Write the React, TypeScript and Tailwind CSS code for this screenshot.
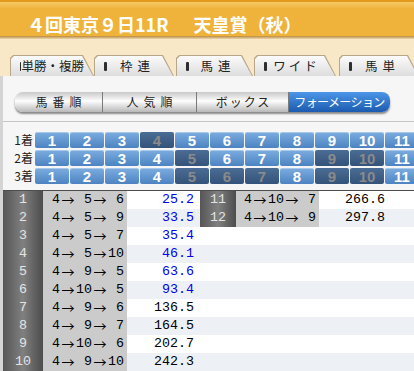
const tabs = [
  { label: "単勝・複勝", cls: "ml-[10px] w-[84px]", text: "tracking-[0px]" },
  { label: "枠 連", cls: "w-[80px]", text: "tracking-[1px]" },
  { label: "馬 連", cls: "ml-[2px] w-[77px]", text: "tracking-[1px]" },
  { label: "ワイド", cls: "ml-[1px] w-[82px]", text: "tracking-[3px]" },
  { label: "馬 単", cls: "ml-[3px] w-[80px]", text: "tracking-[1px]" },
];

const segments = [
  { label: "馬番順", cls: "w-[88px] rounded-l-[8px] tracking-[5px] pl-[5px]" },
  { label: "人気順", cls: "w-[94px] tracking-[5px] pl-[5px]" },
  { label: "ボックス", cls: "w-[92px] tracking-[2px] pl-[2px]" },
];

// disabled numbers per row
const disabled = [[4], [5, 9, 10], [5, 6, 7, 9, 10]];

const leftRows = [
  { n: 1, b: "5", c: "6", odds: "25.2", blue: true },
  { n: 2, b: "5", c: "9", odds: "33.5", blue: true },
  { n: 3, b: "5", c: "7", odds: "35.4", blue: true },
  { n: 4, b: "5", c: "10", odds: "46.1", blue: true },
  { n: 5, b: "9", c: "5", odds: "63.6", blue: true },
  { n: 6, b: "10", c: "5", odds: "93.4", blue: true },
  { n: 7, b: "9", c: "6", odds: "136.5", blue: false },
  { n: 8, b: "9", c: "7", odds: "164.5", blue: false },
  { n: 9, b: "10", c: "6", odds: "202.7", blue: false },
  { n: 10, b: "9", c: "10", odds: "242.3", blue: false },
];

const rightRows = [
  { n: 11, b: "10", c: "7", odds: "266.6" },
  { n: 12, b: "10", c: "9", odds: "297.8" },
];

const Arrow = () => (
  <span className="inline-block w-[16px] text-center font-['Noto_Sans_CJK_JP',sans-serif] text-[13px]">→</span>
);

const Combo = ({ b, c }: { b: string; c: string }) => (
  <span className="inline-flex items-center">
    <span className="inline-block w-[8px] text-right">4</span>
    <Arrow />
    <span className="inline-block w-[16px] text-right">{b}</span>
    <Arrow />
    <span className="inline-block w-[16px] text-right">{c}</span>
  </span>
);

export default function App() {
  return (
    <div className="w-[414px] h-[371px] overflow-hidden bg-[#f8e8c8] font-['Noto_Sans_CJK_JP',sans-serif]">
      {/* //? HEADER */}
      <div className="h-[36px] border-t-2 border-[#e39a1c] bg-linear-to-b from-[#f6c964] from-0% via-[#efb33b] via-20% to-[#efb33b] pl-[27px] pt-[11px]">
        <h1 className="text-white text-[18px] leading-[22px] font-bold whitespace-nowrap">
          ４回東京９日11R<span className="ml-[25px]">天皇賞（秋）</span>
        </h1>
      </div>
      <div className="h-[3px] bg-linear-to-b from-[#b98a3a] to-[#ecd6ac]" />

      {/* //? TABS */}
      <div className="h-[37px] flex items-end">
        {tabs.map((t) => (
          <div
            key={t.label}
            className={`${t.cls} shrink-0 h-[21px] bg-[#b8a68a] pt-[1px] px-[1px] [clip-path:polygon(0_3px,3px_0,calc(100%_-_11px)_0,100%_100%,0_100%)]`}
          >
            <div className="h-full flex items-center bg-linear-to-b from-[#fbfbfb] to-[#dddddd] [clip-path:polygon(0_3px,3px_0,calc(100%_-_11px)_0,100%_100%,0_100%)]">
              <span className="ml-[9px] w-[3px] h-[9px] rounded-[1px] bg-[#2e2e2e]" />
              <span className={`flex-1 text-center pr-[9px] text-[12.5px] leading-none text-[#222] whitespace-nowrap ${t.text}`}>
                {t.label}
              </span>
            </div>
          </div>
        ))}
      </div>

      {/* //? PANEL */}
      <div className="bg-[#f6f6f6] border-l-[3px] border-[#d4d4d4] h-[295px]">
        {/* segmented control */}
        <div className="pt-[16px] pl-[12px]">
          <div className="flex h-[20px] w-[375px] rounded-[8px] shadow-[0_2px_2px_rgba(0,0,0,0.45)]">
            {segments.map((s) => (
              <div
                key={s.label}
                className={`${s.cls} h-full flex items-center justify-center border-r border-[#7a7a7a] bg-linear-to-b from-[#c9c9c9] via-[#fdfdfd] via-45% to-[#b9b9b9] text-[12px] text-[#222] whitespace-nowrap`}
              >
                {s.label}
              </div>
            ))}
            <div className="w-[101px] h-full flex items-center justify-center rounded-r-[8px] bg-linear-to-b from-[#4d96e8] to-[#1b5bb0] text-white text-[12px] tracking-[-0.6px] whitespace-nowrap">
              フォーメーション
            </div>
          </div>
        </div>
        <div className="mt-[9px] h-px bg-[#c6c6c6]" />

        {/* number grid */}
        <div className="mt-[10px] flex flex-col gap-[2px]">
          {disabled.map((dis, r) => (
            <div key={r} className="flex h-[16px] items-center">
              <div className="w-[32px] shrink-0 pr-[2px] text-right text-[12px] leading-[16px] text-[#222]">
                {r + 1}着
              </div>
              {Array.from({ length: 11 }, (_, i) => i + 1).map((n) => {
                const off = dis.includes(n);
                return (
                  <div
                    key={n}
                    className={`w-[34px] h-[16px] mr-[1px] shrink-0 rounded-[2px] flex items-center justify-center font-['Liberation_Sans',sans-serif] font-bold text-[15px] leading-none ${
                      off
                        ? "bg-linear-to-b from-[#4b6c94] to-[#33537a] text-[#8a8a8a]"
                        : "bg-linear-to-b from-[#7cade0] to-[#4c83c1] text-white shadow-[inset_0_1px_0_rgba(255,255,255,0.35)]"
                    }`}
                  >
                    {n}
                  </div>
                );
              })}
            </div>
          ))}
        </div>

        {/* results table */}
        <div className="mt-[6px] border-t border-[#4d4d4d] font-['Liberation_Mono',monospace] text-[13.3px] leading-[18px]">
          {leftRows.map((row, i) => {
            const right = rightRows[i];
            return (
              <div
                key={row.n}
                className={`flex h-[18px] ${i % 2 === 0 ? "bg-white" : "bg-[#edf0f4]"}`}
              >
                <div className="w-[40px] shrink-0 text-center text-[#e4e4e4] bg-linear-to-r from-[#565656] via-[#808080] to-[#4c4c4c]">
                  {row.n}
                </div>
                <div className="w-[84px] shrink-0 bg-[#cbcbcb] text-right pr-[3px] text-black">
                  <Combo b={row.b} c={row.c} />
                </div>
                <div className={`w-[73px] shrink-0 text-right pr-[6px] ${row.blue ? "text-[#0000ee]" : "text-black"}`}>
                  {row.odds}
                </div>
                {right && (
                  <>
                    <div className="w-[36px] shrink-0 text-center text-[#e4e4e4] bg-linear-to-r from-[#565656] via-[#808080] to-[#4c4c4c]">
                      {right.n}
                    </div>
                    <div className="w-[83px] shrink-0 bg-[#cbcbcb] text-right pr-[3px] text-black">
                      <Combo b={right.b} c={right.c} />
                    </div>
                    <div className="w-[73px] shrink-0 text-right pr-[7px] text-black">
                      {right.odds}
                    </div>
                  </>
                )}
              </div>
            );
          })}
        </div>
      </div>
    </div>
  );
}
